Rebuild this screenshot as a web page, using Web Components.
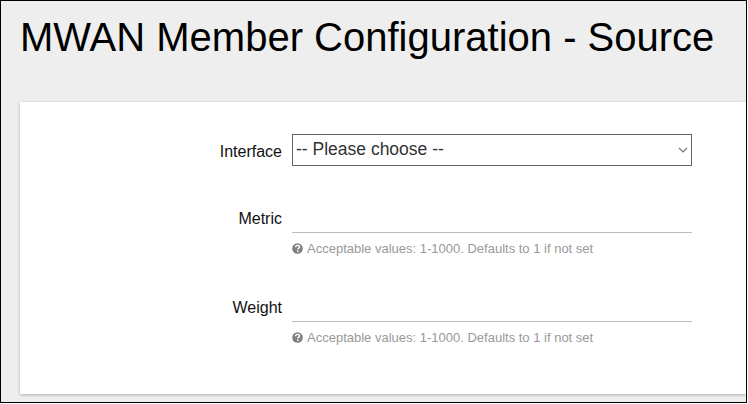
<!DOCTYPE html>
<html lang="en">
    <head>
        <meta charset="UTF-8" />
        <title>MWAN Member Configuration - Source</title>
        <style>
            html, body { margin: 0; background: #fff; }
        </style>
    </head>
    <body>
        <mwan-page heading="MWAN Member Configuration - Source">
            <form-row label="Interface" kind="select">
                <pick-list text="-- Please choose --"></pick-list>
            </form-row>
            <form-row label="Metric">
                <line-input></line-input>
                <help-text>Acceptable values: 1-1000. Defaults to 1 if not set</help-text>
            </form-row>
            <form-row label="Weight">
                <line-input></line-input>
                <help-text>Acceptable values: 1-1000. Defaults to 1 if not set</help-text>
            </form-row>
        </mwan-page>

        <template id="page-tpl">
            <style>
                :host {
                    display: block;
                    box-sizing: border-box;
                    width: 747px;
                    height: 403px;
                    border: 1px solid #000;
                    background: #eee;
                    font-family: "Liberation Sans", Arial, sans-serif;
                    overflow: hidden;
                }
                h1 {
                    margin: 0;
                    padding: 13px 0 0 19px;
                    height: 87px;
                    box-sizing: border-box;
                    font-size: 40px;
                    font-weight: 400;
                    line-height: 46px;
                    color: #000;
                }
                .card {
                    margin: 14px 0 0 19px;
                    height: 292px;
                    box-sizing: border-box;
                    padding-top: 32px;
                    background: #fff;
                    box-shadow: 0 1px 3px rgba(0, 0, 0, .25);
                }
            </style>
            <h1></h1>
            <div class="card"><slot></slot></div>
        </template>

        <template id="row-tpl">
            <style>
                :host {
                    display: grid;
                    grid-template-columns: 262px 400px;
                    column-gap: 10px;
                    height: 89px;
                    color: #111;
                    font-size: 16px;
                }
                :host([kind="select"]) { height: 66px; }
                label { text-align: right; padding-top: 10px; line-height: 18px; }
                :host([kind="select"]) label { padding-top: 9px; }
                .field { display: flex; flex-direction: column; }
            </style>
            <label></label>
            <div class="field"><slot></slot></div>
        </template>

        <template id="pick-tpl">
            <style>
                :host { display: block; position: relative; height: 32px; }
                select {
                    appearance: none;
                    box-sizing: border-box;
                    display: block;
                    width: 100%;
                    height: 32px;
                    margin: 0;
                    padding: 0 20px 2px 3px;
                    border: 1px solid #666;
                    border-radius: 0;
                    background: #fff;
                    color: #333;
                    font: 17.5px "Liberation Sans", Arial, sans-serif;
                }
                svg { position: absolute; right: 4px; top: 13px; pointer-events: none; }
            </style>
            <select><option></option></select>
            <svg width="10" height="6" viewBox="0 0 10 6" fill="none" stroke="#777" stroke-width="1.2">
                <path d="M1 1l4 4 4-4" />
            </svg>
        </template>

        <template id="input-tpl">
            <style>
                :host { display: block; }
                input {
                    box-sizing: border-box;
                    display: block;
                    width: 100%;
                    height: 33px;
                    padding: 0;
                    border: 0;
                    border-bottom: 1px solid #bbb;
                    outline: 0;
                    background: transparent;
                    font: 16px "Liberation Sans", Arial, sans-serif;
                }
            </style>
            <input type="text" />
        </template>

        <template id="help-tpl">
            <style>
                :host {
                    display: flex;
                    align-items: center;
                    gap: 4px;
                    margin-top: 8px;
                    color: #999;
                    font-size: 13px;
                    line-height: 15px;
                }
                svg { flex: none; }
            </style>
            <svg width="11" height="11" viewBox="0 0 11 11">
                <circle cx="5.5" cy="5.5" r="5.3" fill="#808080" />
                <path d="M3.6 4.2c0-1.1.8-1.8 2-1.8s1.9.7 1.9 1.6c0 1.3-1.7 1.3-1.7 2.4" fill="none" stroke="#fff" stroke-width="1.4" />
                <rect x="5" y="7.5" width="1.5" height="1.5" fill="#fff" />
            </svg>
            <span><slot></slot></span>
        </template>

        <script>
            // every element just clones its own template into an open shadow root
            class Base extends HTMLElement {
                constructor(tplId) {
                    super();
                    this.attachShadow({ mode: "open" });
                    this.shadowRoot.append(document.getElementById(tplId).content.cloneNode(true));
                }
            }

            class MwanPage extends Base {
                constructor() { super("page-tpl"); }
                connectedCallback() {
                    this.shadowRoot.querySelector("h1").textContent = this.getAttribute("heading");
                }
            }

            class FormRow extends Base {
                constructor() { super("row-tpl"); }
                connectedCallback() {
                    this.shadowRoot.querySelector("label").textContent = this.getAttribute("label");
                }
            }

            class PickList extends Base {
                constructor() { super("pick-tpl"); }
                connectedCallback() {
                    this.shadowRoot.querySelector("option").textContent = this.getAttribute("text");
                }
            }

            class LineInput extends Base {
                constructor() { super("input-tpl"); }
            }

            class HelpText extends Base {
                constructor() { super("help-tpl"); }
            }

            customElements.define("mwan-page", MwanPage);
            customElements.define("form-row", FormRow);
            customElements.define("pick-list", PickList);
            customElements.define("line-input", LineInput);
            customElements.define("help-text", HelpText);
        </script>
    </body>
</html>
